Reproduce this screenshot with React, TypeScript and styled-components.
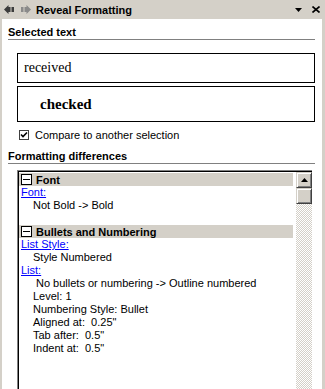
import React from "react";
import styled, { createGlobalStyle } from "styled-components";

const Global = createGlobalStyle`
  html, body { margin: 0; padding: 0; background: #d4d0c8; }
  body { width: 325px; height: 389px; overflow: hidden; font-family: "Liberation Sans", Arial, sans-serif; }
`;

const Frame = styled.div`
  width: 325px;
  height: 389px;
  display: flex;
  flex-direction: column;
  background: #d4d0c8;
  overflow: hidden;
`;

const TitleBar = styled.div`
  height: 19px;
  display: flex;
  align-items: center;
  padding: 0 5px 0 4px;
`;

const NavIcon = styled.svg`
  width: 10px;
  height: 9px;
  margin-right: 7px;
  flex: none;
`;

const Title = styled.div`
  font-size: 11px;
  font-weight: bold;
  color: #000;
  margin-left: -2px;
  flex: 1;
`;

const TitleButton = styled.svg<{ $gap?: number }>`
  flex: none;
  margin-left: ${(p) => p.$gap ?? 8}px;
`;

const Panel = styled.div`
  flex: 1;
  margin: 0 3px 0 2px;
  background: #fff;
  display: flex;
  flex-direction: column;
  min-height: 0;
`;

const Heading = styled.div<{ $top?: number }>`
  margin: 0 7px 0 6px;
  padding-top: ${(p) => p.$top ?? 7}px;
  height: 13px;
  line-height: 13px;
  font-size: 11px;
  font-weight: bold;
  color: #000;
  border-bottom: 1px solid #808080;
`;

const SampleBox = styled.div<{ $h: number; $bold?: boolean }>`
  margin: ${(p) => (p.$bold ? "3px" : "13px")} 7px 0 15px;
  height: ${(p) => p.$h}px;
  border: 1px solid #000;
  display: flex;
  align-items: center;
  padding-left: ${(p) => (p.$bold ? 22 : 6)}px;
  font-family: "Liberation Serif", "Times New Roman", serif;
  font-size: ${(p) => (p.$bold ? 15 : 14)}px;
  font-weight: ${(p) => (p.$bold ? "bold" : "normal")};
  color: #000;
`;

const CheckRow = styled.label`
  display: flex;
  align-items: center;
  margin: 7px 0 0 17px;
  height: 12px;
  font-size: 11px;
  color: #000;
  gap: 6px;
`;

const ListBox = styled.div`
  margin: 6px 10px 0 15px;
  flex: 1;
  display: flex;
  border-top: 1px solid #808080;
  border-left: 1px solid #808080;
  min-height: 0;
`;

const ListInner = styled.div`
  flex: 1;
  display: flex;
  border-top: 1px solid #000;
  border-left: 1px solid #000;
  min-height: 0;
`;

const ListContent = styled.div`
  flex: 1;
  padding: 1px 3px 0 0;
  font-size: 11px;
  color: #000;
`;

const GroupHeader = styled.div`
  height: 13px;
  background: #d4d0c8;
  display: flex;
  align-items: center;
  padding-left: 2px;
  gap: 4px;
  font-weight: bold;
`;

const MinusBox = styled.svg`
  width: 11px;
  height: 11px;
  flex: none;
`;

const LinkLine = styled.div`
  height: 13px;
  line-height: 13px;
  padding-left: 2px;
  color: #0000ff;
  text-decoration: underline;
`;

const ValueLine = styled.div<{ $indent?: number }>`
  height: 13px;
  line-height: 13px;
  padding-left: ${(p) => p.$indent ?? 14}px;
  white-space: pre;
`;

const Spacer = styled.div`
  height: 13px;
`;

const ScrollBar = styled.div`
  width: 16px;
  display: flex;
  flex-direction: column;
  background: repeating-conic-gradient(#d4d0c8 0 25%, #ffffff 0 50%) 0 0 / 2px 2px;
`;

const ScrollButton = styled.div`
  height: 16px;
  box-sizing: border-box;
  background: #d4d0c8;
  border-top: 1px solid #d4d0c8;
  border-left: 1px solid #d4d0c8;
  border-right: 1px solid #404040;
  border-bottom: 1px solid #404040;
  box-shadow: inset 1px 1px 0 #ffffff, inset -1px -1px 0 #808080;
  display: flex;
  align-items: center;
  justify-content: center;
`;

const Minus = () => (
  <MinusBox viewBox="0 0 11 11">
    <rect x="0.5" y="0.5" width="10" height="10" fill="#fff" stroke="#000" />
    <path d="M2 5.5 H9" stroke="#000" />
  </MinusBox>
);

export default function App() {
  return (
    <Frame>
      <Global />
      <TitleBar>
        <NavIcon viewBox="0 0 10 9">
          <path d="M0 4.5 L4.5 0 L4.5 2 L10 2 L10 7 L4.5 7 L4.5 9 Z" fill="#3c3c3c" />
          <rect x="6.5" y="2" width="1" height="5" fill="#d4d0c8" />
        </NavIcon>
        <NavIcon viewBox="0 0 10 9">
          <path d="M10 4.5 L5.5 0 L5.5 2 L0 2 L0 7 L5.5 7 L5.5 9 Z" fill="#8a8a8a" />
          <rect x="2.5" y="2" width="1" height="5" fill="#d4d0c8" />
        </NavIcon>
        <Title>Reveal Formatting</Title>
        <TitleButton width="7" height="4" viewBox="0 0 7 4">
          <path d="M0 0 H7 L3.5 4 Z" fill="#000" />
        </TitleButton>
        <TitleButton $gap={10} width="8" height="7" viewBox="0 0 8 7">
          <path d="M0.5 0.5 L7.5 6.5 M7.5 0.5 L0.5 6.5" stroke="#000" strokeWidth="1.6" />
        </TitleButton>
      </TitleBar>
      <Panel>
        <Heading>Selected text</Heading>
        <SampleBox $h={28}>received</SampleBox>
        <SampleBox $h={34} $bold>checked</SampleBox>
        <CheckRow>
          <svg width="10" height="10" viewBox="0 0 10 10">
            <rect x="0.5" y="0.5" width="9" height="9" fill="#fff" stroke="#404040" />
            <path d="M2 4.5 L4 6.5 L8 2.5" fill="none" stroke="#000" strokeWidth="1.6" />
          </svg>
          Compare to another selection
        </CheckRow>
        <Heading $top={9}>Formatting differences</Heading>
        <ListBox>
          <ListInner>
            <ListContent>
              <GroupHeader>
                <Minus />
                Font
              </GroupHeader>
              <LinkLine>Font:</LinkLine>
              <ValueLine>Not Bold -&gt; Bold</ValueLine>
              <Spacer />
              <GroupHeader>
                <Minus />
                Bullets and Numbering
              </GroupHeader>
              <LinkLine>List Style:</LinkLine>
              <ValueLine>Style Numbered</ValueLine>
              <LinkLine>List:</LinkLine>
              <ValueLine $indent={17}>No bullets or numbering -&gt; Outline numbered</ValueLine>
              <ValueLine>Level: 1</ValueLine>
              <ValueLine>Numbering Style: Bullet</ValueLine>
              <ValueLine>{"Aligned at:  0.25\""}</ValueLine>
              <ValueLine>{"Tab after:  0.5\""}</ValueLine>
              <ValueLine>{"Indent at:  0.5\""}</ValueLine>
            </ListContent>
            <ScrollBar>
              <ScrollButton>
                <svg width="7" height="4" viewBox="0 0 7 4">
                  <path d="M3.5 0 L7 4 H0 Z" fill="#000" />
                </svg>
              </ScrollButton>
              <ScrollButton />
            </ScrollBar>
          </ListInner>
        </ListBox>
      </Panel>
    </Frame>
  );
}
